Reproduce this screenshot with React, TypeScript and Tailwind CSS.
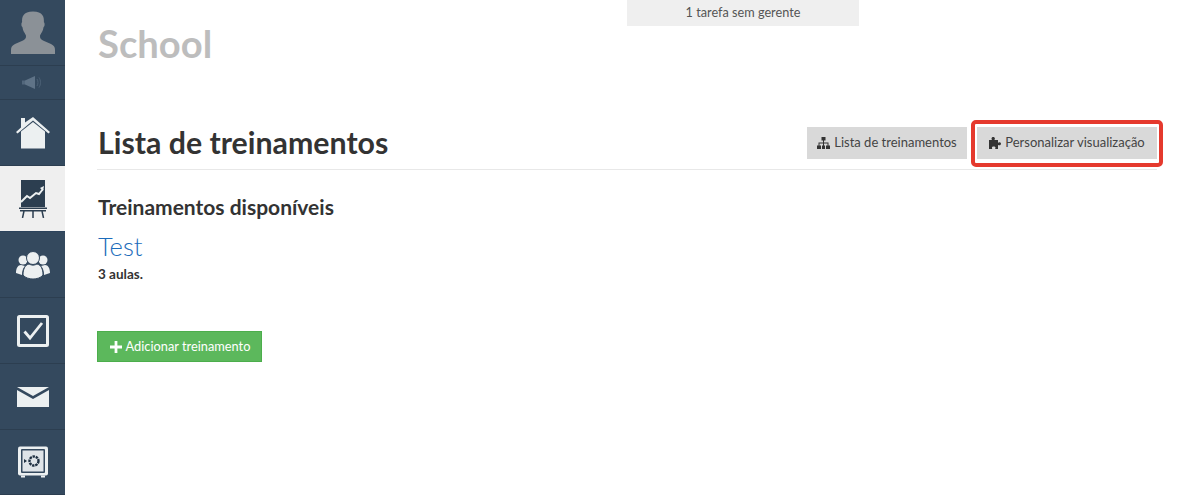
import React from "react";

function NavCell({ children, active, h = "h-[65px]" }: { children: React.ReactNode; active?: boolean; h?: string }) {
  return (
    <div className={`${h} flex items-center justify-center border-b ${active ? "bg-[#efefef] border-[#2c435c]" : "bg-[#34495e] border-[#2c3e50]"}`}>
      {children}
    </div>
  );
}

const Avatar = () => (
  <svg width="44" height="44" viewBox="0 0 44 44">
    <path fill="#8b9197" d="M0 43v-4c0-3 1-4.500 4-6l8-3.500c2.500-1.200 3-2.500 3-4.500 0-1-.8-2-2-4-1-1.500-1.200-3.500-1.600-5-.8-.4-1-1.500-1-3 0-1 .3-1.500.7-1.800C10.800 6 12 .500 22 .500S33.200 6 32.900 11.200c.4.300.7.800.7 1.800 0 1.500-.2 2.600-1 3-.4 1.500-.6 3.500-1.600 5-1.200 2-2 3-2 4 0 2 .5 3.300 3 4.500l8 3.500c3 1.500 4 3 4 6v4z" />
  </svg>
);

const Speaker = () => (
  <svg width="21" height="13" viewBox="0 0 21 13">
    <rect x="0" y="4.500" width="3" height="4" fill="#52677c" />
    <path fill="#5f7387" d="M3 4.500l10-4.500v13L3 8.500z" />
    <path fill="none" stroke="#4d6277" strokeWidth="1" d="M15 3c1.300 2.200 1.300 4.800 0 7M17 1.500c2 3 2 7 0 10" />
  </svg>
);

const Home = () => (
  <svg width="34" height="32" viewBox="0 0 34 32">
    <path fill="#ecf0f1" d="M5 1h4v4.500L17 0l17 15-1.500 1.500L17 3.500 1.500 16.500 0 15l5-4.500z" />
    <path fill="#ecf0f1" d="M5 14.500L17 5l12 9.500V31.500H5z" />
  </svg>
);

const Chart = () => (
  <svg width="28" height="38" viewBox="0 0 28 38">
    <rect x="2" y="0" width="24" height="27" fill="#2c3e50" />
    <path fill="none" stroke="#ecf0f1" strokeWidth="2" d="M2 22l6-6 3 2 6-5 3 1 4-5" />
    <path fill="#ecf0f1" d="M25 6l-1 5-3-3z" />
    <rect x="0" y="27.500" width="28" height="1.500" fill="#2c3e50" />
    <rect x="1" y="30" width="26" height="1.500" fill="#2c3e50" />
    <path stroke="#2c3e50" strokeWidth="1.500" d="M5 31l-1.500 7M14 31v7M23 31l1.500 7" />
  </svg>
);

const People = () => (
  <svg width="34" height="28" viewBox="0 0 34 28">
    <circle cx="7" cy="9" r="4.500" fill="#ecf0f1" />
    <circle cx="27" cy="9" r="4.500" fill="#ecf0f1" />
    <path fill="#ecf0f1" d="M0 22c0-5 2-8 5-8l4 1c-2 2-3 5-3 9zM34 22c0-5-2-8-5-8l-4 1c2 2 3 5 3 9z" />
    <circle cx="17" cy="7" r="6.500" fill="#ecf0f1" stroke="#34495e" strokeWidth="1" />
    <path fill="#ecf0f1" stroke="#34495e" strokeWidth="1" d="M7 24c0-6 2-10 6-11 2.500 1.500 5.500 1.500 8 0 4 1 6 5 6 11-2 3-7 4-10 4s-8-1-10-4z" />
  </svg>
);

const Check = () => (
  <svg width="32" height="32" viewBox="0 0 32 32">
    <rect x="1.500" y="1.500" width="29" height="29" rx="1" fill="none" stroke="#ecf0f1" strokeWidth="3" />
    <path fill="none" stroke="#ecf0f1" strokeWidth="2.800" d="M7.500 16.500l5.500 6.500L25 8" />
  </svg>
);

const Mail = () => (
  <svg width="32" height="20" viewBox="0 0 32 20">
    <path fill="#ecf0f1" d="M0 0l16 9L32 0zM0 3v17h32V3L16 12z" />
  </svg>
);

const Safe = () => (
  <svg width="32" height="32" viewBox="0 0 32 32">
    <rect x="1" y="0.500" width="30" height="29" rx="2" fill="#ecf0f1" />
    <rect x="4" y="3" width="24" height="24" rx="1" fill="#34495e" />
    <rect x="5.500" y="4.500" width="21" height="21" fill="#dfe4e8" />
    <circle cx="17" cy="15" r="4.500" fill="none" stroke="#1f3042" strokeWidth="2.400" strokeDasharray="2.400 .8" />
    <path fill="#1f3042" d="M7 13l3 2-3 2z" />
    <rect x="4" y="29.500" width="4" height="2" fill="#ecf0f1" />
    <rect x="24" y="29.500" width="4" height="2" fill="#ecf0f1" />
  </svg>
);

const Sitemap = () => (
  <svg width="13" height="12" viewBox="0 0 13 12">
    <path fill="#333" d="M4.500 0h4v3.500H7V5.500h4.500V8.500H13V12H9V8.500h1.500V6.500H7V8.500h1V12H5V8.500h1V6.500H2.500V8.500H4V12H0V8.500h1.500V5.500H6V3.500H4.500z" />
  </svg>
);

const Puzzle = () => (
  <svg width="13" height="12" viewBox="0 0 13 12">
    <path fill="#333" d="M0 3h2.800c.2-.4-.3-.8-.3-1.400C2.500.600 3.200 0 4.200 0s1.700.600 1.700 1.600c0 .6-.5 1-.3 1.400H9v2.600c.4.200.8-.3 1.400-.3 1 0 1.600.600 1.600 1.500s-.600 1.500-1.600 1.500c-.6 0-1-.5-1.400-.3V12H6.200c-.2-.4.3-.7.3-1.200 0-.8-.8-1.200-1.800-1.200s-1.800.400-1.800 1.200c0 .5.500.8.300 1.200H0z" />
  </svg>
);

const Plus = () => (
  <svg width="12" height="12" viewBox="0 0 13 13">
    <path fill="#fff" d="M5 0h3v5h5v3H8v5H5V8H0V5h5z" />
  </svg>
);

export default function App() {
  return (
    <div className="flex h-[495px] w-[1199px] overflow-hidden bg-white font-['Lato','Open_Sans',sans-serif] text-[#333]">
      <nav className="w-[65px] shrink-0 bg-[#34495e]">
        <NavCell h="h-[66px]"><Avatar /></NavCell>
        <NavCell h="h-[34px]"><Speaker /></NavCell>
        <NavCell h="h-[66px]"><Home /></NavCell>
        <NavCell h="h-[66px]" active><Chart /></NavCell>
        <NavCell h="h-[66px]"><People /></NavCell>
        <NavCell h="h-[66px]"><Check /></NavCell>
        <NavCell h="h-[66px]"><Mail /></NavCell>
        <NavCell h="h-[65px]"><Safe /></NavCell>
      </nav>

      <main className="relative flex-1 pl-[32px] pr-[42px]">
        <div className="absolute left-[562px] top-0 flex h-[26px] w-[232px] items-center justify-center bg-[#efefef] text-[12.7px] text-[#555]">
          1 tarefa sem gerente
        </div>

        <h1 className="pl-px pt-[21px] text-[38.2px] font-bold leading-[44px] text-[#bdbdbd]">School</h1>

        <div className="mt-[62px] flex h-[42px] items-start justify-between">
          <h2 className="-mt-[3px] pl-px text-[30.3px] font-bold leading-[36px] text-[#333]">Lista de treinamentos</h2>
          <div className="flex items-start gap-[10px]">
            <button className="flex h-[32px] w-[160px] items-center justify-center gap-[4px] bg-[#d9d9d9] text-[13px] text-[#444]">
              <Sitemap />
              Lista de treinamentos
            </button>
            <div className="relative">
              <button className="flex h-[32px] w-[180px] items-center justify-center gap-[3px] bg-[#d9d9d9] text-[13px] text-[#444]">
                <Puzzle />
                Personalizar visualização
              </button>
              <div className="absolute -inset-x-[6px] -top-[7px] -bottom-[8px] rounded-[5px] border-[4px] border-[#e5392d]" />
            </div>
          </div>
        </div>

        <div className="h-px bg-[#e8e8e8]" />

        <h3 className="mt-[25px] pl-px text-[21px] font-bold leading-[24px] text-[#333]">Treinamentos disponíveis</h3>
        <a className="mt-[11px] block pl-px text-[25.500px] font-light leading-[32px] text-[#1c6cbb]">Test</a>
        <p className="mt-[3px] pl-px text-[13.500px] font-bold leading-[18px] text-[#333]">3 aulas.</p>

        <button className="mt-[48px] flex h-[31px] w-[165px] items-center justify-center gap-[4px] border border-[#4cae4c] bg-[#5cb85c] pl-px text-[12.8px] text-white">
          <Plus />
          Adicionar treinamento
        </button>
      </main>
    </div>
  );
}
